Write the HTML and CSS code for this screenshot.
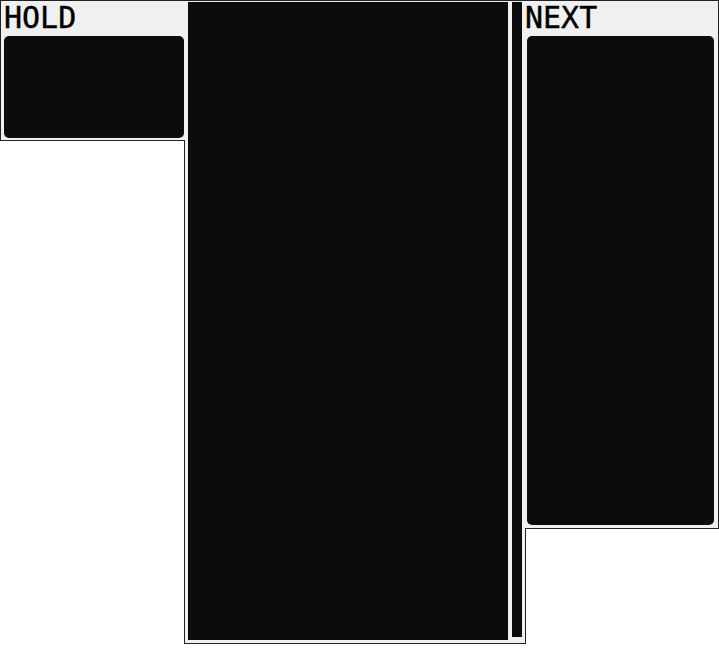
FILE: index.html
```html
<!DOCTYPE html>
<html>
<head>
<meta charset="utf-8">
<link rel="stylesheet" href="styles.css">
</head>
<body>
<div class="game">
  <section class="side hold">
    <div class="title">HOLD</div>
    <div class="well hold-well"></div>
  </section>
  <section class="board-panel">
    <div class="board"></div>
    <div class="meter"></div>
  </section>
  <section class="side next">
    <div class="title">NEXT</div>
    <div class="well next-well"></div>
  </section>
</div>
</body>
</html>
```
FILE: styles.css
```css
html, body {
  margin: 0;
  padding: 0;
  background: #ffffff;
}
.game {
  display: flex;
  align-items: flex-start;
  font-family: "DejaVu Sans Mono", "Liberation Mono", monospace;
}
.side {
  box-sizing: border-box;
  background: #f0f0f0;
  border: 1px solid #222;
  position: relative;
  z-index: 1;
  display: flex;
  flex-direction: column;
}
.title {
  font-size: 30px;
  font-weight: normal;
  line-height: 34px;
  color: #000;
  margin-bottom: 1px;
  -webkit-text-stroke: 0.4px #000;
}
.well {
  background: #0c0c0c;
  border-radius: 5px;
}
.hold {
  width: 185px;
  height: 141px;
  border-right: 0;
  padding: 0 1px 2px 3px;
}
.hold-well {
  height: 102px;
}
.board-panel {
  box-sizing: border-box;
  width: 342px;
  height: 644px;
  margin-left: -1px;
  background: #f0f0f0;
  border: 1px solid #222;
  padding: 1px 3px 3px 3px;
  display: flex;
  gap: 4px;
  align-items: flex-start;
}
.board {
  width: 320px;
  height: 638px;
  background: #0c0c0c;
}
.meter {
  width: 10px;
  height: 635px;
  background: #0c0c0c;
}
.next {
  width: 194px;
  height: 529px;
  margin-left: -1px;
  border-left: 0;
  padding: 0 4px 3px 2px;
}
.next .title {
  margin-left: -2px;
}
.next-well {
  height: 489px;
}
```
